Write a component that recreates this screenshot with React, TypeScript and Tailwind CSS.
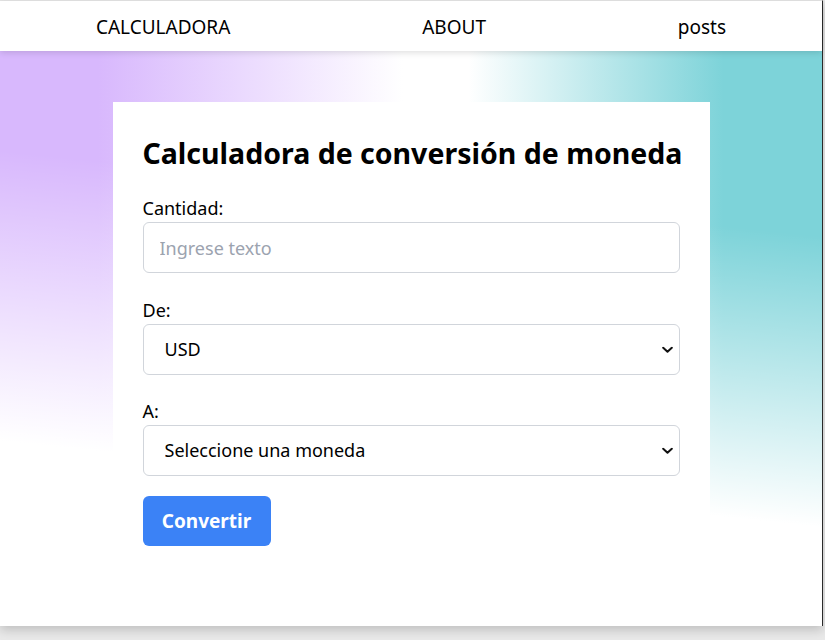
import React from "react";

function Chevron() {
  return (
    <svg
      className="pointer-events-none absolute right-[7px] top-1/2 -translate-y-1/2"
      width="11"
      height="7"
      viewBox="0 0 11 7"
      fill="none"
    >
      <path d="M1.2 1.2 L5.5 5.3 L9.8 1.2" stroke="#111" strokeWidth="2" strokeLinecap="round" strokeLinejoin="round" />
    </svg>
  );
}

export default function App() {
  return (
    <div className="w-[825px] h-[640px] overflow-hidden bg-[#e9e9e9] font-['Noto_Sans',sans-serif] text-black">
      <div className="w-[823px] h-[626px] flex flex-col border-t border-[#e3e3e3] border-r border-r-[#2a2a2a] bg-white shadow-[0_4px_10px_rgba(0,0,0,0.18)]">
        <nav className="relative z-10 h-[50px] shrink-0 bg-white flex items-center justify-around pt-[2px] shadow-[0_2px_6px_rgba(0,0,0,0.12)] text-[19px]">
          <a className="leading-none">CALCULADORA</a>
          <a className="leading-none">ABOUT</a>
          <a className="leading-none">posts</a>
        </nav>
        <main className="flex-1 flex justify-center bg-[linear-gradient(186deg,rgba(255,255,255,0)_28%,#fff_72%),linear-gradient(to_right,#d8b8fd_12%,#fff_49%,#fff_57%,#7dd3d9_88%)]">
          <div className="mt-[51px] w-[597px] h-[474px] bg-white px-[30px] pt-[33px]">
            <h1 className="text-[28.5px] leading-[36px] font-bold whitespace-nowrap">
              Calculadora de conversión de moneda
            </h1>
            <label className="block mt-[23px] text-[18px] leading-[28px]">Cantidad:</label>
            <input
              type="text"
              placeholder="Ingrese texto"
              className="block w-full h-[51px] border border-[#d1d5db] rounded-md px-4 text-[18px] placeholder:text-[#9ca3af] outline-none"
            />
            <label className="block mt-[23px] text-[18px] leading-[28px]">De:</label>
            <div className="relative">
              <select
                defaultValue="USD"
                className="block w-full h-[51px] appearance-none border border-[#d1d5db] rounded-md pl-[21px] pr-8 text-[18px] bg-white outline-none"
              >
                <option value="USD">USD</option>
                <option value="EUR">EUR</option>
              </select>
              <Chevron />
            </div>
            <label className="block mt-[22px] text-[18px] leading-[28px]">A:</label>
            <div className="relative">
              <select
                defaultValue=""
                className="block w-full h-[51px] appearance-none border border-[#d1d5db] rounded-md pl-[21px] pr-8 text-[18px] bg-white outline-none"
              >
                <option value="">Seleccione una moneda</option>
                <option value="USD">USD</option>
              </select>
              <Chevron />
            </div>
            <button className="mt-[20px] h-[50px] w-[128px] rounded-md bg-[#3b82f6] text-white font-bold text-[19px]">
              Convertir
            </button>
          </div>
        </main>
      </div>
    </div>
  );
}
